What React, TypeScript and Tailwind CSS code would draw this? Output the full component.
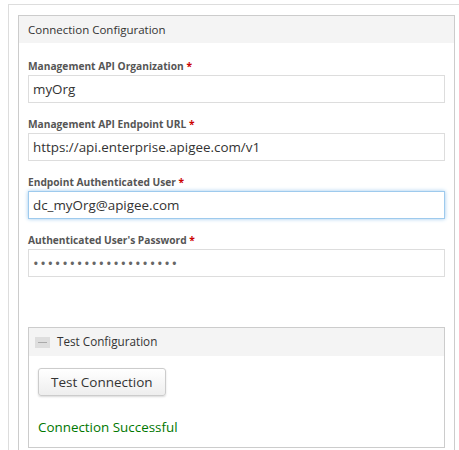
import React from 'react'

const font = { fontFamily: '"Open Sans", "DejaVu Sans", sans-serif' }

const Field: React.FC<{ label: string; value: string; focused?: boolean; password?: boolean }> = ({ label, value, focused, password }) => (
    <div className="flex flex-col">
        <label className="text-[10.2px] font-bold text-[#555] leading-[16px] mt-[1px] mb-[1px]">
            {label} <span className="text-[#c00]">*</span>
        </label>
        <input
            type={password ? 'password' : 'text'}
            defaultValue={value}
            readOnly
            className={`h-[28px] w-full border px-[4px] outline-none ${
                password ? 'text-[15px] tracking-[1.65px] text-[#666]' : 'text-[13.4px] text-[#333]'
            } ${focused ? 'border-[#9ecaed] shadow-[0_0_4px_#9ecaed]' : 'border-[#ddd]'}`}
            style={font}
        />
    </div>
)

const App: React.FC = () => {
    return (
        <div className="w-[459px] h-[450px] bg-white overflow-hidden pt-[4px] pl-[8px]" style={font}>
            <div className="border-t border-l border-[#ddd] h-full pt-[10px] pl-[9px] pr-[4px]">
                <div className="border border-[#ccc] border-b-0 h-full">
                    {/* header */}
                    <div className="h-[27px] bg-[#f4f4f4] flex items-center px-[9px] text-[11.5px] text-[#333]">
                        Connection Configuration
                    </div>

                    <div className="px-[9px] pt-[14px] flex flex-col gap-[12px]">
                        <Field label="Management API Organization" value="myOrg" />
                        <Field label="Management API Endpoint URL" value="https://api.enterprise.apigee.com/v1" />
                        <Field label="Endpoint Authenticated User" value="dc_myOrg@apigee.com" focused />
                        <Field label="Authenticated User's Password" value="12345678901234567890" password />
                    </div>

                    {/* Test configuration */}
                    <div className="mx-[9px] mt-[50px] border border-[#ccc]">
                        <div className="h-[28px] bg-[#f4f4f4] flex items-center gap-[7px] px-[6px] text-[11.7px] text-[#333]">
                            <span className="w-[15px] h-[11px] bg-[#dedede] flex items-center justify-center">
                                <span className="w-[9px] h-px bg-[#aaa]" />
                            </span>
                            Test Configuration
                        </div>
                        <div className="px-[9px] pt-[12px] pb-[10px]">
                            <button className="h-[28px] px-[12px] text-[13.5px] text-[#333] border border-[#ccc] rounded-[3px] bg-gradient-to-b from-white to-[#eee] shadow-[0_1px_2px_rgba(0,0,0,0.15)]">
                                Test Connection
                            </button>
                            <div className="mt-[22px] text-[13.4px] leading-[19px] text-[#070]">Connection Successful</div>
                        </div>
                    </div>
                </div>
            </div>
        </div>
    )
}

export default App
